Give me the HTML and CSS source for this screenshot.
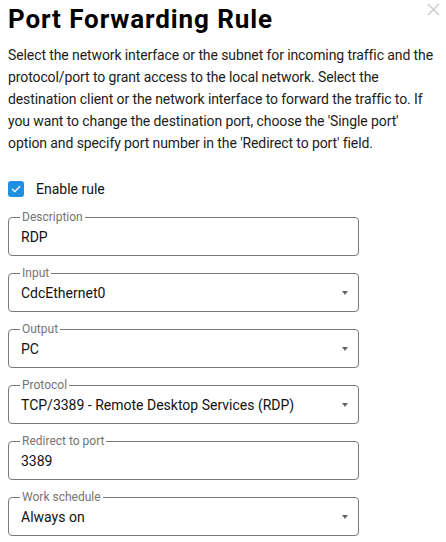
FILE: index.html
```html
<!DOCTYPE html>
<html>
<head>
<meta charset="utf-8">
<link rel="stylesheet" href="styles.css">
</head>
<body>
<div class="dialog">
  <button class="close" aria-label="Close">
    <svg width="13" height="13" viewBox="0 0 13 13"><path d="M1 1 L12 12 M12 1 L1 12" stroke="#cfcfcf" stroke-width="1.6" fill="none"/></svg>
  </button>
  <h1 class="title">Port Forwarding Rule</h1>
  <p class="intro">Select the network interface or the subnet for incoming traffic and the protocol/port to grant access to the local network. Select the destination client or the network interface to forward the traffic to. If you want to change the destination port, choose the 'Single port' option and specify port number in the 'Redirect to port' field.</p>
  <label class="check">
    <span class="box"><svg width="10" height="8" viewBox="0 0 10 8"><path d="M1 4 L3.8 6.6 L9 1.2" stroke="#fff" stroke-width="1.3" fill="none"/></svg></span>
    <span>Enable rule</span>
  </label>
  <div class="fields">
    <fieldset class="field"><legend>Description</legend><div class="row"><span class="value">RDP</span></div></fieldset>
    <fieldset class="field"><legend>Input</legend><div class="row"><span class="value">CdcEthernet0</span><span class="arrow"></span></div></fieldset>
    <fieldset class="field"><legend>Output</legend><div class="row"><span class="value">PC</span><span class="arrow"></span></div></fieldset>
    <fieldset class="field"><legend>Protocol</legend><div class="row"><span class="value">TCP/3389 - Remote Desktop Services (RDP)</span><span class="arrow"></span></div></fieldset>
    <fieldset class="field"><legend>Redirect to port</legend><div class="row"><span class="value">3389</span></div></fieldset>
    <fieldset class="field"><legend>Work schedule</legend><div class="row"><span class="value">Always on</span><span class="arrow"></span></div></fieldset>
  </div>
</div>
</body>
</html>
```
FILE: styles.css
```css
html, body {
  margin: 0;
  padding: 0;
  background: #fff;
}
body {
  font-family: Roboto, "Liberation Sans", sans-serif;
  color: #1c1c1c;
}
.dialog {
  position: relative;
  padding: 4px 7px 0 8px;
}
.close {
  position: absolute;
  top: 3px;
  right: 6px;
  border: 0;
  background: none;
  padding: 0;
  width: 13px;
  height: 13px;
  display: block;
}
.close svg { display: block; }
.title {
  margin: 0;
  font-size: 26px;
  line-height: 30px;
  font-weight: 700;
  letter-spacing: 0.9px;
  color: #000;
}
.intro {
  margin: 10px 0 0 0;
  font-size: 14px;
  line-height: 22px;
  letter-spacing: -0.1px;
  color: #1c1c1c;
}
.check {
  margin-top: 23px;
  height: 24px;
  display: flex;
  align-items: center;
  gap: 12px;
  font-size: 14px;
  color: #111;
}
.box {
  width: 16px;
  height: 16px;
  border-radius: 3px;
  background: #1e8fe1;
  display: flex;
  align-items: center;
  justify-content: center;
}
.box svg { display: block; }
.fields {
  margin-top: 9px;
  width: 351px;
  display: flex;
  flex-direction: column;
  gap: 10px;
}
.field {
  margin: 0;
  padding: 2px 10px 0 12px;
  border: 1px solid #7a7a7a;
  border-radius: 4px;
  height: 46px;
  box-sizing: border-box;
  min-width: 0;
}
.field legend {
  font-size: 12px;
  line-height: 14px;
  color: #757575;
  padding: 0 2px;
  margin-left: -1px;
}
.row {
  height: 21px;
  display: flex;
  align-items: center;
}
.value {
  font-size: 14px;
  color: #111;
  flex: 1;
}
.arrow {
  width: 0;
  height: 0;
  border-left: 3.5px solid transparent;
  border-right: 3.5px solid transparent;
  border-top: 4px solid #666;
}
```
